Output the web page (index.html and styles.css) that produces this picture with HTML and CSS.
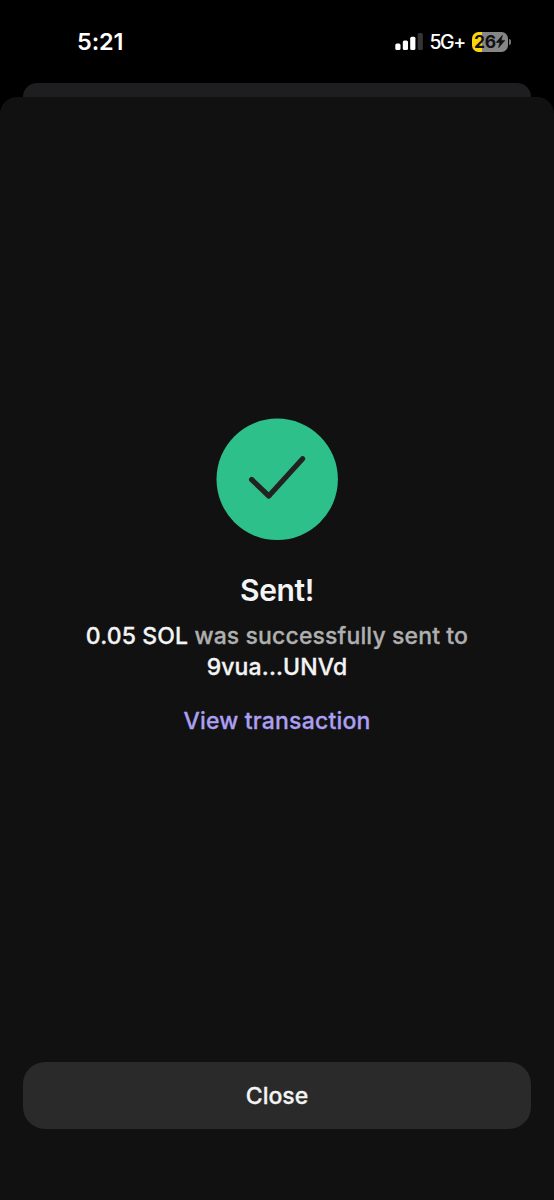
FILE: index.html
```html
<!DOCTYPE html>
<html lang="en">
<head>
<meta charset="utf-8">
<title>Sent</title>
<link rel="stylesheet" href="styles.css">
</head>
<body>
<div class="screen">
  <header class="status">
    <span class="time">5:21</span>
    <div class="indicators">
      <svg class="signal" width="28" height="17" viewBox="0 0 28 17">
        <g fill="#fff">
          <rect x="0.3" y="10.5" width="5.2" height="6.5" rx="1.5"/>
          <rect x="7.8" y="7.6" width="5.2" height="9.4" rx="1.5"/>
          <rect x="15.2" y="3.8" width="5.2" height="13.2" rx="1.5"/>
        </g>
        <rect x="22.7" y="0" width="5.2" height="17" rx="1.5" fill="#343434"/>
      </svg>
      <span class="network">5G+</span>
      <div class="battery">
        <span class="level">26</span>
        <svg class="bolt" width="9" height="13" viewBox="0 0 9 13"><path d="M6.4 0.3L0.2 7.4H3.9L2.6 12.7L8.8 5.4H5.1Z" fill="#111" stroke="#111" stroke-width="0.6" stroke-linejoin="round"/></svg>
      </div>
      <span class="nub"></span>
    </div>
  </header>
  <div class="back-card"></div>
  <main class="sheet">
    <svg class="check" width="122" height="122" viewBox="0 0 122 122">
      <circle cx="61.2" cy="61.3" r="60.7" fill="#2ec08b"/>
      <path d="M35.6 61.5L52.8 78L86.6 40.7" fill="none" stroke="#222" stroke-width="5.2" stroke-linecap="round" stroke-linejoin="round"/>
    </svg>
    <h1 class="title">Sent!</h1>
    <p class="message"><span class="line"><b class="strong">0.05 SOL</b> was successfully sent to</span><br><b class="strong recipient">9vua...UNVd</b></p>
    <a class="link">View transaction</a>
    <button class="close">Close</button>
  </main>
</div>
</body>
</html>
```

FILE: styles.css
```css
* { box-sizing: border-box; }
body {
  margin: 0;
  background: #000;
  font-family: Inter, "Liberation Sans", sans-serif;
  color: #f4f4f4;
}
.screen {
  width: 554px;
  height: 1200px;
  display: flex;
  flex-direction: column;
  overflow: hidden;
}
.status {
  height: 83px;
  padding: 27px 43.5px 0 77px;
  display: flex;
  justify-content: space-between;
  align-items: flex-start;
}
.time {
  font-size: 23.5px;
  line-height: 29px;
  font-weight: 600;
  color: #fff;
  letter-spacing: -0.1px;
}
.indicators {
  display: flex;
  align-items: center;
  height: 29px;
}
.signal { margin-right: 7px; }
.network {
  width: 42px;
  font-size: 19.5px;
  line-height: 29px;
  padding-top: 1px;
  font-weight: 500;
  letter-spacing: -1.5px;
  color: #fff;
}
.battery {
  width: 36px;
  height: 20px;
  border-radius: 6.5px;
  background: linear-gradient(90deg, #fcd60a 0 10px, #868686 10px);
  color: #111;
  display: flex;
  align-items: center;
  justify-content: center;
}
.level {
  font-size: 17.5px;
  line-height: 20px;
  font-weight: 700;
  letter-spacing: -0.2px;
}
.nub {
  width: 2px;
  height: 6px;
  margin-left: 1px;
  border-radius: 0 2px 2px 0;
  background: #777;
}
.back-card {
  height: 14px;
  margin: 0 23px;
  border-radius: 14px 14px 0 0;
  background: #1e1e20;
}
.sheet {
  flex: 1;
  padding: 321px 23px 71px;
  border-radius: 17px 17px 0 0;
  background: #111;
  display: flex;
  flex-direction: column;
  align-items: center;
}
.check { flex: none; }
.title {
  margin: 31px 0 0;
  font-size: 30px;
  line-height: 38px;
  font-weight: 600;
  letter-spacing: -0.4px;
}
.message {
  margin: 12px 0 0;
  font-size: 23px;
  line-height: 31px;
  font-weight: 500;
  letter-spacing: 0.13px;
  -webkit-text-stroke: 0.3px;
  text-align: center;
  color: #afafaf;
  white-space: nowrap;
}
.strong {
  font-weight: 500;
  color: #f4f4f4;
}
.link {
  margin-top: 23px;
  font-size: 23px;
  line-height: 30px;
  font-weight: 500;
  letter-spacing: 0.2px;
  -webkit-text-stroke: 0.3px;
  color: #ab9ff2;
}
.close {
  width: 100%;
  height: 67px;
  margin-top: auto;
  padding: 1px 0 0;
  border: 0;
  border-radius: 22px;
  background: #2a2a2a;
  color: #f4f4f4;
  font: 500 23px/30px Inter, "Liberation Sans", sans-serif;
  -webkit-text-stroke: 0.3px;
}
```
